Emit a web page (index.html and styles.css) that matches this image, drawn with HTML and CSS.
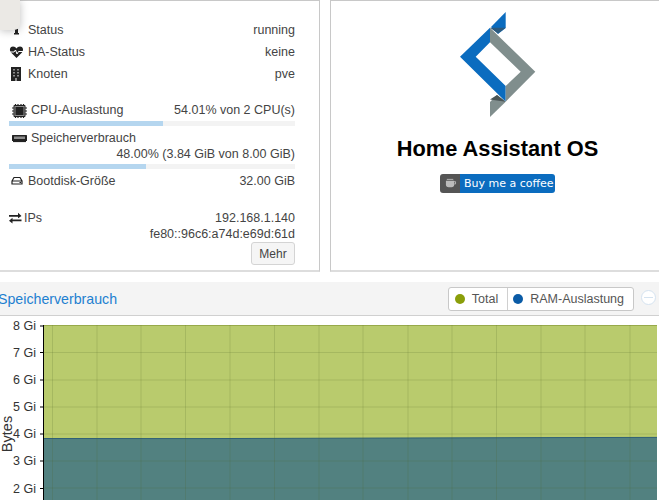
FILE: index.html
```html
<!DOCTYPE html>
<html lang="de">
	<head>
		<meta name="viewport" content="width=device-width, initial-scale=1" />
		<title>Home Assistant OS</title>
		<link rel="stylesheet" href="styles.css">
	</head>
	<body>
		<div class="popup"></div>
		<div class="top">
			<div class="panel info">
				<div class="row">
					<span class="label">
						<svg class="ico" viewBox="0 0 19 14"><path d="M6 5h3v5h1v1.500H5V10h1V6.500H5z"/></svg>Status
					</span>
					<span>running</span>
				</div>
				<div class="row">
					<span class="label">
						<svg class="ico" viewBox="0 0 19 14"><path d="M7.500 13 2 7.500C0 5 1 1.500 4 1.500c1.500 0 2.800.8 3.500 2 .7-1.200 2-2 3.500-2 3 0 4 3.500 2 6z"/><path class="pulse" d="M1 7h4l1.500-2L8 9l1.500-2.500H14"/></svg>HA-Status
					</span>
					<span>keine</span>
				</div>
				<div class="row">
					<span class="label">
						<svg class="ico" viewBox="0 0 19 14"><path d="M2 0h10v14H2z"/><path class="faint" d="M4 2h2v1.500H4zM8 2h2v1.500H8zM4 5h2v1.500H4zM8 5h2v1.500H8zM4 8h2v1.500H4zM8 8h2v1.500H8zM6 11h2v3H6z"/></svg>Knoten
					</span>
					<span>pve</span>
				</div>

				<div class="row usage">
					<span class="label">
						<svg class="ico wide" viewBox="0 0 22 16"><path d="M4.500 4a1 1 0 0 1 1-1h10a1 1 0 0 1 1 1v10a1 1 0 0 1-1 1h-10a1 1 0 0 1-1-1z"/><path class="faint" d="M5.500 4h10v10h-10z"/><path d="M6.500 5h8v8h-8z"/><path class="pins" d="M6.500 2v2M9 2v2M12 2v2M14.500 2v2M6.500 14v2M9 14v2M12 14v2M14.500 14v2M3 6h2M3 9h2M3 12h2M16 6h2M16 9h2M16 12h2"/></svg>CPU-Auslastung
					</span>
					<span>54.01% von 2 CPU(s)</span>
				</div>
				<div class="bar"><div class="fill" style="width: 53.8%"></div></div>

				<div class="row mem-title">
					<span class="label">
						<svg class="ico wide" viewBox="0 0 22 16"><path d="M3.500 5h14a.5.5 0 0 1 .5.500V11H3V5.500a.5.500 0 0 1 .5-.5z"/><path class="pins" d="M4 11.500h13"/><path class="faint" d="M5 6.500h11v2.500H5z"/></svg>Speicherverbrauch
					</span>
				</div>
				<div class="row mem-value"><span>48.00% (3.84 GiB von 8.00 GiB)</span></div>
				<div class="bar"><div class="fill" style="width: 48%"></div></div>

				<div class="row boot">
					<span class="label">
						<svg class="ico" viewBox="0 0 19 14"><path class="line" d="M3 7 5 3.500h6L13 7v3H3zM3 7h10"/><path d="M10.500 8h1.500v1H10.500z"/></svg>Bootdisk-Größe
					</span>
					<span>32.00 GiB</span>
				</div>

				<div class="row ips">
					<span class="label">
						<svg class="ico small" viewBox="0 0 15 14"><path d="M0 4h9V1.800L12.500 5 9 7.200V5.700H0z"/><path d="M12.500 8.500H3.500V6.800L0 9.700l3.500 2.800v-2.200h9z"/></svg>IPs
					</span>
					<span>192.168.1.140</span>
				</div>
				<div class="row ip6"><span>fe80::96c6:a74d:e69d:61d</span></div>
				<div class="actions"><button class="more" type="button">Mehr</button></div>
			</div>

			<div class="panel about">
				<svg class="logo" viewBox="460 11 76 107">
					<path fill="#0b6cbf" d="M505.700 12 505.700 28 498 34 491 27z"/>
					<path fill="#2d5a7d" d="M490 27.700h15.700L498 33.500z"/>
					<path fill="#0b6cbf" d="M490 27.700 460 56.700 505.700 101.700V86L475.700 56.700 490 42.300z"/>
					<path fill="#808e8d" d="M490 27.700 535.300 71.700 505.700 101.700V86L520.700 71.700 490 42.300z"/>
					<path fill="#808e8d" d="M490 117V102L497 95 505.700 101.700z"/>
					<path fill="#4a5556" d="M497 95 505.700 101.700 490 99.500z"/>
				</svg>
				<h2 class="name">Home Assistant OS</h2>
				<a class="badge" href="#">
					<span class="badge-ico">
						<svg viewBox="0 0 14 12"><path d="M2 3h9v4a3 3 0 0 1-3 3H5a3 3 0 0 1-3-3z"/><path class="cup" d="M11 4h1.500v2.500H11M3 1.500h7"/></svg>
					</span>
					<span class="badge-txt">Buy me a coffee</span>
				</a>
			</div>
		</div>

		<div class="chart">
			<div class="chart-head">
				<span class="chart-title">Speicherverbrauch</span>
				<div class="legend">
					<span class="legend-item"><i class="dot total"></i>Total</span>
					<span class="legend-item"><i class="dot ram"></i>RAM-Auslastung</span>
				</div>
				<span class="collapse"></span>
			</div>
			<svg class="plot" viewBox="0 316 659 184">
				<rect class="area-total" x="44" y="325" width="613" height="175"/>
				<path class="area-ram" d="M44 438.500 200 438.600 400 438 550 437.600 657 437.400V500H44z"/>
				<path class="area-line" d="M44 438.500 200 438.600 400 438 550 437.600 657 437.400"/>
				<path class="total-line" d="M44 325.500H657"/>
				<path class="grid" d="M52.500 325V500M97 325V500M141 325V500M185.500 325V500M230 325V500M274.500 325V500M319 325V500M363 325V500M408 325V500M452 325V500M496.500 325V500M541 325V500M585 325V500M630 325V500M44 352.500H657M44 380H657M44 407H657M44 434H657M44 461H657M44 488H657"/>
				<path class="axis" d="M43.500 325V500M40 326H43M40 352.500H43M40 380H43M40 407H43M40 434H43M40 461H43M40 488.500H43"/>
				<g class="ticks">
					<text x="36" y="330">8 Gi</text>
					<text x="36" y="357">7 Gi</text>
					<text x="36" y="384">6 Gi</text>
					<text x="36" y="411">5 Gi</text>
					<text x="36" y="438">4 Gi</text>
					<text x="36" y="465">3 Gi</text>
					<text x="36" y="493">2 Gi</text>
				</g>
				<text class="axis-name" transform="translate(11.500 434) rotate(-90)">Bytes</text>
			</svg>
		</div>
	</body>
</html>
```

FILE: styles.css
```css
html, body {
	height: 500px;
	overflow: hidden;
}
body {
	background-color: #fff;
	color: #444;
	font: normal 12.5px "Liberation Sans", Arial, sans-serif;
	margin: 0;
	position: relative;
}
.popup {
	position: absolute;
	top: 0;
	left: 0;
	width: 20px;
	height: 30px;
	background-color: #ebe9e5;
	border-bottom-right-radius: 6px;
	box-shadow: 0 1px 8px rgba(0, 0, 0, 0.25);
}
.top {
	display: grid;
	grid-template-columns: 320px 329px;
	gap: 10px;
	height: 272px;
}
.panel {
	border: 1px solid #c8c8c8;
	border-width: 1px 1px 2px 1px;
	border-bottom-color: #ddd;
	box-sizing: border-box;
	height: 272px;
}
.info {
	border-left: 0;
	padding: 18px 24px 0 9px;
}
.about {
	border-right: 0;
	display: flex;
	flex-direction: column;
	align-items: center;
	padding-left: 5px;
}

/* status rows */
.row {
	display: flex;
	justify-content: space-between;
	align-items: center;
	height: 22px;
}
.row.usage {
	height: 18px;
	margin-top: 16px;
}
.row.mem-title {
	height: 16px;
	margin-top: 4px;
}
.row.mem-value {
	height: 16px;
	justify-content: flex-end;
}
.row.boot {
	height: 18px;
	margin-top: 3px;
}
.row.ips {
	height: 18px;
	margin-top: 19px;
}
.row.ip6 {
	height: 16px;
	justify-content: flex-end;
	margin-top: -1px;
}
.label {
	display: flex;
	align-items: center;
}
.ico {
	width: 19px;
	height: 14px;
	fill: #222;
	flex: none;
}
.ico.wide {
	width: 22px;
	height: 16px;
}
.ico.small {
	width: 15px;
}
.ico .pulse {
	fill: none;
	stroke: #fff;
	stroke-width: 1;
}
.ico .faint {
	fill: #8d8d8d;
}
.ico .pins {
	fill: none;
	stroke: #222;
	stroke-width: 1.2;
}
.ico .line {
	fill: none;
	stroke: #222;
	stroke-width: 1.2;
}
.bar {
	height: 5px;
	background-color: #f3f3f3;
	margin-top: 2px;
}
.fill {
	height: 100%;
	background-color: #b5d6ef;
}
.actions {
	display: flex;
	justify-content: flex-end;
}
.more {
	width: 44px;
	height: 23px;
	padding: 0;
	background-color: #f5f5f5;
	border: 1px solid #d4d4d4;
	border-radius: 3px;
	color: #444;
	font: inherit;
	font-size: 12px;
}

/* right panel */
.logo {
	width: 76px;
	height: 107px;
	margin-top: 10px;
}
.name {
	color: #000;
	font-size: 21.8px;
	font-weight: bold;
	line-height: 28px;
	margin: 17px 0 0 0;
}
.badge {
	display: flex;
	width: 115px;
	height: 19px;
	margin-top: 11px;
	border-radius: 3px;
	overflow: hidden;
	color: #fff;
	text-decoration: none;
	font: 11px "DejaVu Sans", sans-serif;
}
.badge-ico {
	display: flex;
	align-items: center;
	justify-content: center;
	width: 20px;
	background-color: #555;
}
.badge-ico svg {
	width: 13px;
	height: 11px;
	fill: #bbb;
}
.badge-ico .cup {
	fill: none;
	stroke: #bbb;
}
.badge-txt {
	flex: 1;
	line-height: 19px;
	padding-left: 4px;
	background-color: #0b6cbf;
}

/* chart */
.chart {
	margin-top: 10px;
}
.chart-head {
	display: flex;
	align-items: center;
	height: 33px;
	background-color: #f4f4f4;
	border-bottom: 1px solid #d0d0d0;
}
.chart-title {
	color: #1e80d0;
	font-size: 14.2px;
	margin-left: -2px;
	flex: 1;
}
.legend {
	display: flex;
	height: 24px;
	box-sizing: border-box;
	background-color: #fff;
	border: 1px solid #c8c8c8;
	border-radius: 3px;
	color: #555;
	margin-top: 1px;
}
.legend-item {
	display: flex;
	align-items: center;
	padding: 0 9px 0 6px;
}
.legend-item + .legend-item {
	border-left: 1px solid #d0d0d0;
	padding: 0 9px 0 5px;
}
.dot {
	width: 10px;
	height: 10px;
	border-radius: 50%;
	margin-right: 7px;
}
.dot.total {
	background-color: #8a9e0a;
}
.dot.ram {
	background-color: #0a5ba6;
}
.collapse {
	position: relative;
	box-sizing: border-box;
	width: 15px;
	height: 15px;
	margin: -3px 3px 0 7px;
	background-color: #fff;
	border: 1px solid #d5e3f0;
	border-radius: 50%;
}
.collapse:after {
	content: "";
	position: absolute;
	left: 2px;
	right: 2px;
	top: 6px;
	height: 1px;
	background-color: #d5e3f0;
}
.plot {
	display: block;
	width: 659px;
	height: 184px;
}
.area-total {
	fill: #b9cb6d;
}
.area-ram {
	fill: #528180;
}
.area-line {
	fill: none;
	stroke: #2f6076;
	stroke-width: 1;
}
.total-line {
	fill: none;
	stroke: #97a94a;
	stroke-width: 1;
}
.grid {
	fill: none;
	stroke: rgba(80, 100, 40, 0.18);
	stroke-width: 1;
}
.axis {
	fill: none;
	stroke: #000;
	stroke-width: 1;
}
.ticks text {
	fill: #333;
	font-size: 12.5px;
	text-anchor: end;
}
.axis-name {
	fill: #333;
	font-size: 14.5px;
	text-anchor: middle;
}
```
